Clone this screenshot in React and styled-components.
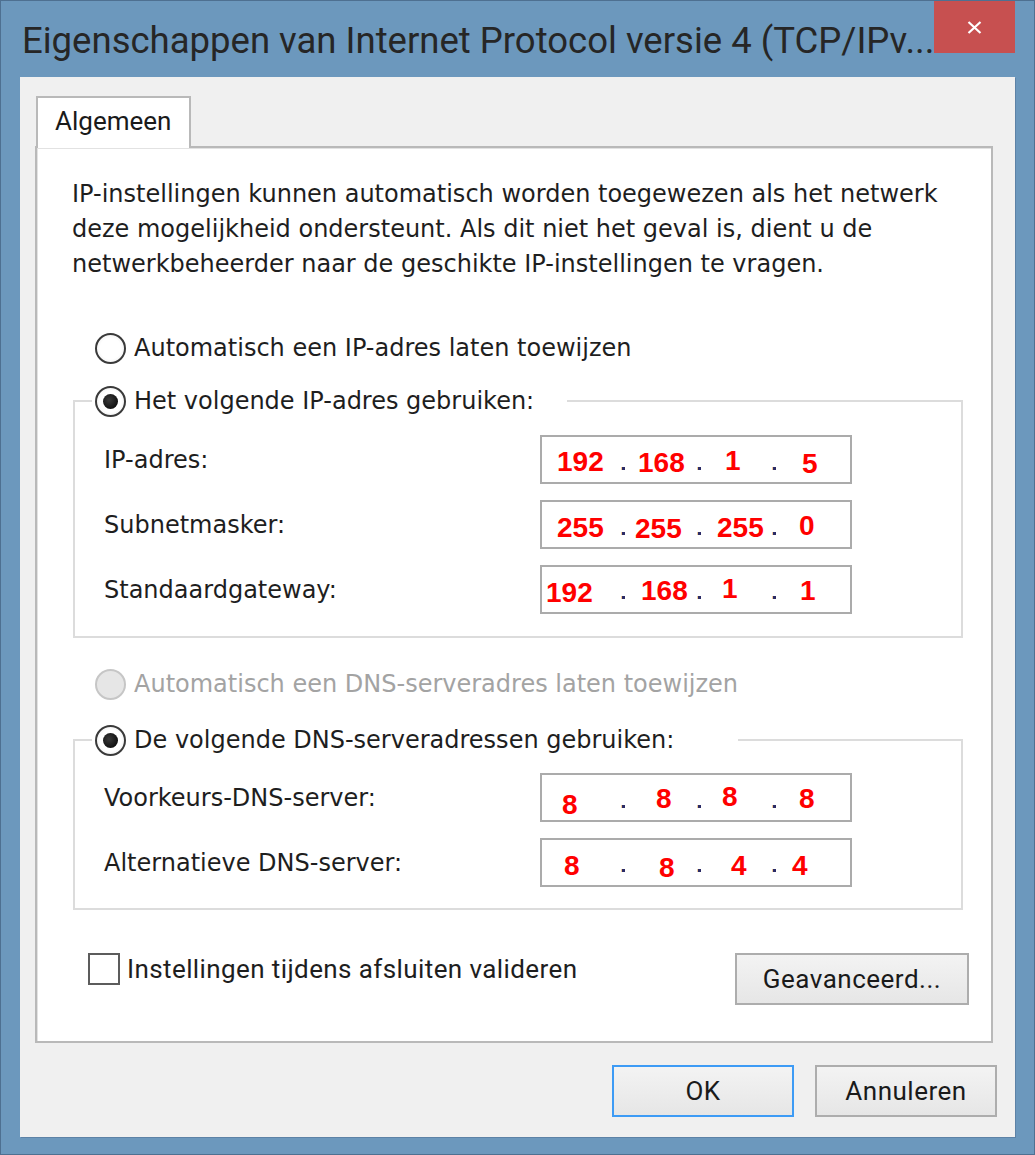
import React from 'react';
import styled, { createGlobalStyle } from 'styled-components';

const UI_FONT = '"Roboto", "Liberation Sans", sans-serif';
const DLG_FONT = '"DejaVu Sans", "Liberation Sans", sans-serif';

const GlobalStyle = createGlobalStyle`
  html, body {
    margin: 0;
    padding: 0;
    background: #6c98bd;
  }
  body {
    font-family: ${DLG_FONT};
  }
`;

const Window = styled.div`
  width: 1035px;
  height: 1155px;
  box-sizing: border-box;
  background: #6c98bd;
  border: 1px solid #4e7091;
  display: flex;
  flex-direction: column;
`;

const TitleBar = styled.div`
  height: 76px;
  flex-shrink: 0;
  display: flex;
  align-items: flex-start;
  justify-content: space-between;
  padding: 0 19px 0 21px;
`;

const Title = styled.div`
  margin-top: 22px;
  font-family: ${UI_FONT};
  font-size: 36.5px;
  line-height: 36px;
  color: #262626;
  white-space: nowrap;
`;

const CloseButton = styled.div`
  width: 83px;
  height: 52px;
  background: #c75050;
  display: flex;
  align-items: center;
  justify-content: center;
`;

const Client = styled.div`
  flex: 1;
  margin: 0 19px 17px 19px;
  background: #f0f0f0;
  padding: 19px 0 0 15px;
  display: flex;
  flex-direction: column;
  box-shadow: 1px 1px 0 #5d82a6;
`;

const TabStrip = styled.div`
  display: flex;
  padding-left: 1px;
`;

const Tab = styled.div`
  position: relative;
  z-index: 1;
  width: 155px;
  height: 52px;
  box-sizing: border-box;
  margin-bottom: -2px;
  background: #fff;
  border: 2px solid #b9b9b9;
  border-bottom: none;
  padding: 8px 0 0 17px;
  font-family: ${UI_FONT};
  font-size: 26px;
  color: #1a1a1a;
`;

const Panel = styled.div`
  margin-right: 22px;
  background: #fff;
  border: 2px solid #b9b9b9;
  box-shadow: inset 1px 1px 0 #e2e2e2;
  padding: 29px 22px 36px 35px;
`;

const Intro = styled.p`
  margin: 0;
  font-size: 24px;
  line-height: 35px;
  color: #1e1e1e;
`;

const RadioRow = styled.label`
  display: flex;
  align-items: center;
  gap: 8px;
  height: 32px;
  margin-left: 23px;
  margin-top: ${p => p.$top || 0}px;
  font-size: 24px;
  white-space: nowrap;
  color: ${p => (p.$disabled ? '#a3a3a3' : '#1e1e1e')};
`;

const RadioCircle = styled.span`
  width: 31px;
  height: 31px;
  box-sizing: border-box;
  border-radius: 50%;
  border: 2px solid ${p => (p.$disabled ? '#c6c6c6' : '#3a3a3a')};
  background: ${p =>
    p.$disabled ? '#e6e6e6' : 'radial-gradient(circle, #ffffff 55%, #e4e4e4 100%)'};
  display: flex;
  align-items: center;
  justify-content: center;
  flex-shrink: 0;

  &::after {
    content: '';
    display: ${p => (p.$checked ? 'block' : 'none')};
    width: 15px;
    height: 15px;
    border-radius: 50%;
    background: radial-gradient(circle at 40% 40%, #3a3a3a, #111 70%);
  }
`;

const GroupBox = styled.fieldset`
  margin: ${p => p.$top}px 6px 0 1px;
  padding: ${p => p.$padTop}px 0 ${p => p.$bottom}px 29px;
  border: 2px solid #dcdcdc;
  display: grid;
  grid-template-columns: 436px 312px;
  row-gap: ${p => p.$gap}px;
  align-items: center;
`;

const Legend = styled.legend`
  width: ${p => p.$width}px;
  box-sizing: border-box;
  margin-left: -12px;
  padding: 0 0 0 3px;
  background: #fff;

  ${RadioRow} {
    margin-left: 0;
  }
`;

const FieldLabel = styled.span`
  font-size: 24px;
  color: #1e1e1e;
`;

const IpField = styled.div`
  position: relative;
  width: 312px;
  height: 49px;
  box-sizing: border-box;
  border: 2px solid #ababab;
  background: #fff;
`;

const IpDot = styled.span`
  position: absolute;
  left: ${p => p.$x - 2}px;
  top: ${p => p.$y - 2}px;
  width: 3px;
  height: 3px;
  background: #2b2b66;
  box-shadow: -1px 0 0 rgba(230, 170, 90, 0.6);
`;

const IpNumber = styled.span`
  position: absolute;
  left: ${p => p.$x - 2}px;
  top: ${p => p.$y - 2}px;
  font-family: "Liberation Sans", Arial, sans-serif;
  font-weight: bold;
  font-size: 28px;
  line-height: 28px;
  color: #ff0000;
`;

const BottomRow = styled.div`
  margin-top: 43px;
  display: flex;
  justify-content: space-between;
  align-items: flex-start;
`;

const CheckRow = styled.label`
  display: flex;
  align-items: center;
  gap: 7px;
  margin-left: 16px;
  height: 32px;
  font-family: ${UI_FONT};
  font-size: 26px;
  letter-spacing: 0.4px;
  color: #1e1e1e;
`;

const CheckBox = styled.span`
  width: 32px;
  height: 32px;
  box-sizing: border-box;
  border: 2px solid #5c5c5c;
  background: #fff;
`;

const Button = styled.button`
  width: ${p => p.$width}px;
  height: 52px;
  box-sizing: border-box;
  border: 2px solid ${p => (p.$primary ? '#3d9bf5' : '#adadad')};
  background: linear-gradient(#f3f3f3, #e6e6e6);
  font-family: ${UI_FONT};
  font-size: 26px;
  letter-spacing: 0.5px;
  color: #1a1a1a;
  padding: 0;
  cursor: default;
`;

const Footer = styled.div`
  margin-top: 22px;
  padding-right: 18px;
  display: flex;
  justify-content: flex-end;
  gap: 21px;
`;

const ipGroups = [
  {
    legend: 'Het volgende IP-adres gebruiken:',
    legendWidth: 475,
    top: 21,
    padTop: 18,
    bottom: 22,
    gap: 16,
    rows: [
      { label: 'IP-adres:', dotY: 32, parts: [['192', 17, 13], ['168', 98, 14], ['1', 185, 12], ['5', 262, 15]] },
      { label: 'Subnetmasker:', dotY: 32, parts: [['255', 17, 14], ['255', 95, 15], ['255', 177, 14], ['0', 259, 12]] },
      { label: 'Standaardgateway:', dotY: 31, parts: [['192', 6, 14], ['168', 101, 12], ['1', 182, 10], ['1', 260, 12]] },
    ],
  },
  {
    legend: 'De volgende DNS-serveradressen gebruiken:',
    legendWidth: 646,
    top: 24,
    padTop: 17,
    bottom: 21,
    gap: 16,
    rows: [
      { label: 'Voorkeurs-DNS-server:', dotY: 32, parts: [['8', 22, 18], ['8', 116, 12], ['8', 182, 10], ['8', 259, 12]] },
      { label: 'Alternatieve DNS-server:', dotY: 31, parts: [['8', 24, 14], ['8', 119, 16], ['4', 191, 14], ['4', 252, 14]] },
    ],
  },
];

const dotXs = [82, 158, 233];

const Radio = ({ checked, disabled, children, top }) => (
  <RadioRow $disabled={disabled} $top={top}>
    <RadioCircle $checked={checked} $disabled={disabled} />
    {children}
  </RadioRow>
);

const IpInput = ({ parts, dotY }) => (
  <IpField>
    {dotXs.map(x => (
      <IpDot key={x} $x={x} $y={dotY} />
    ))}
    {parts.map(([text, x, y], i) => (
      <IpNumber key={i} $x={x} $y={y}>
        {text}
      </IpNumber>
    ))}
  </IpField>
);

const IpGroup = ({ group }) => (
  <GroupBox $top={group.top} $padTop={group.padTop} $bottom={group.bottom} $gap={group.gap}>
    <Legend $width={group.legendWidth}>
      <Radio checked>{group.legend}</Radio>
    </Legend>
    {group.rows.map(row => (
      <React.Fragment key={row.label}>
        <FieldLabel>{row.label}</FieldLabel>
        <IpInput parts={row.parts} dotY={row.dotY} />
      </React.Fragment>
    ))}
  </GroupBox>
);

const App = () => (
  <>
    <GlobalStyle />
    <Window>
      <TitleBar>
        <Title>Eigenschappen van Internet Protocol versie 4 (TCP/IPv...</Title>
        <CloseButton>
          <svg width="15" height="13" viewBox="0 0 15 13">
            <path d="M1.5 1 L13.5 12 M13.5 1 L1.5 12" stroke="#fff" strokeWidth="2.2" />
          </svg>
        </CloseButton>
      </TitleBar>
      <Client>
        <TabStrip>
          <Tab>Algemeen</Tab>
        </TabStrip>
        <Panel>
          <Intro>
            IP-instellingen kunnen automatisch worden toegewezen als het netwerk
            <br />
            deze mogelijkheid ondersteunt. Als dit niet het geval is, dient u de
            <br />
            netwerkbeheerder naar de geschikte IP-instellingen te vragen.
          </Intro>
          <Radio top={50}>Automatisch een IP-adres laten toewijzen</Radio>
          <IpGroup group={ipGroups[0]} />
          <Radio disabled top={30}>Automatisch een DNS-serveradres laten toewijzen</Radio>
          <IpGroup group={ipGroups[1]} />
          <BottomRow>
            <CheckRow>
              <CheckBox />
              Instellingen tijdens afsluiten valideren
            </CheckRow>
            <Button $width={234}>Geavanceerd...</Button>
          </BottomRow>
        </Panel>
        <Footer>
          <Button $width={182} $primary>OK</Button>
          <Button $width={182}>Annuleren</Button>
        </Footer>
      </Client>
    </Window>
  </>
);

export default App;
